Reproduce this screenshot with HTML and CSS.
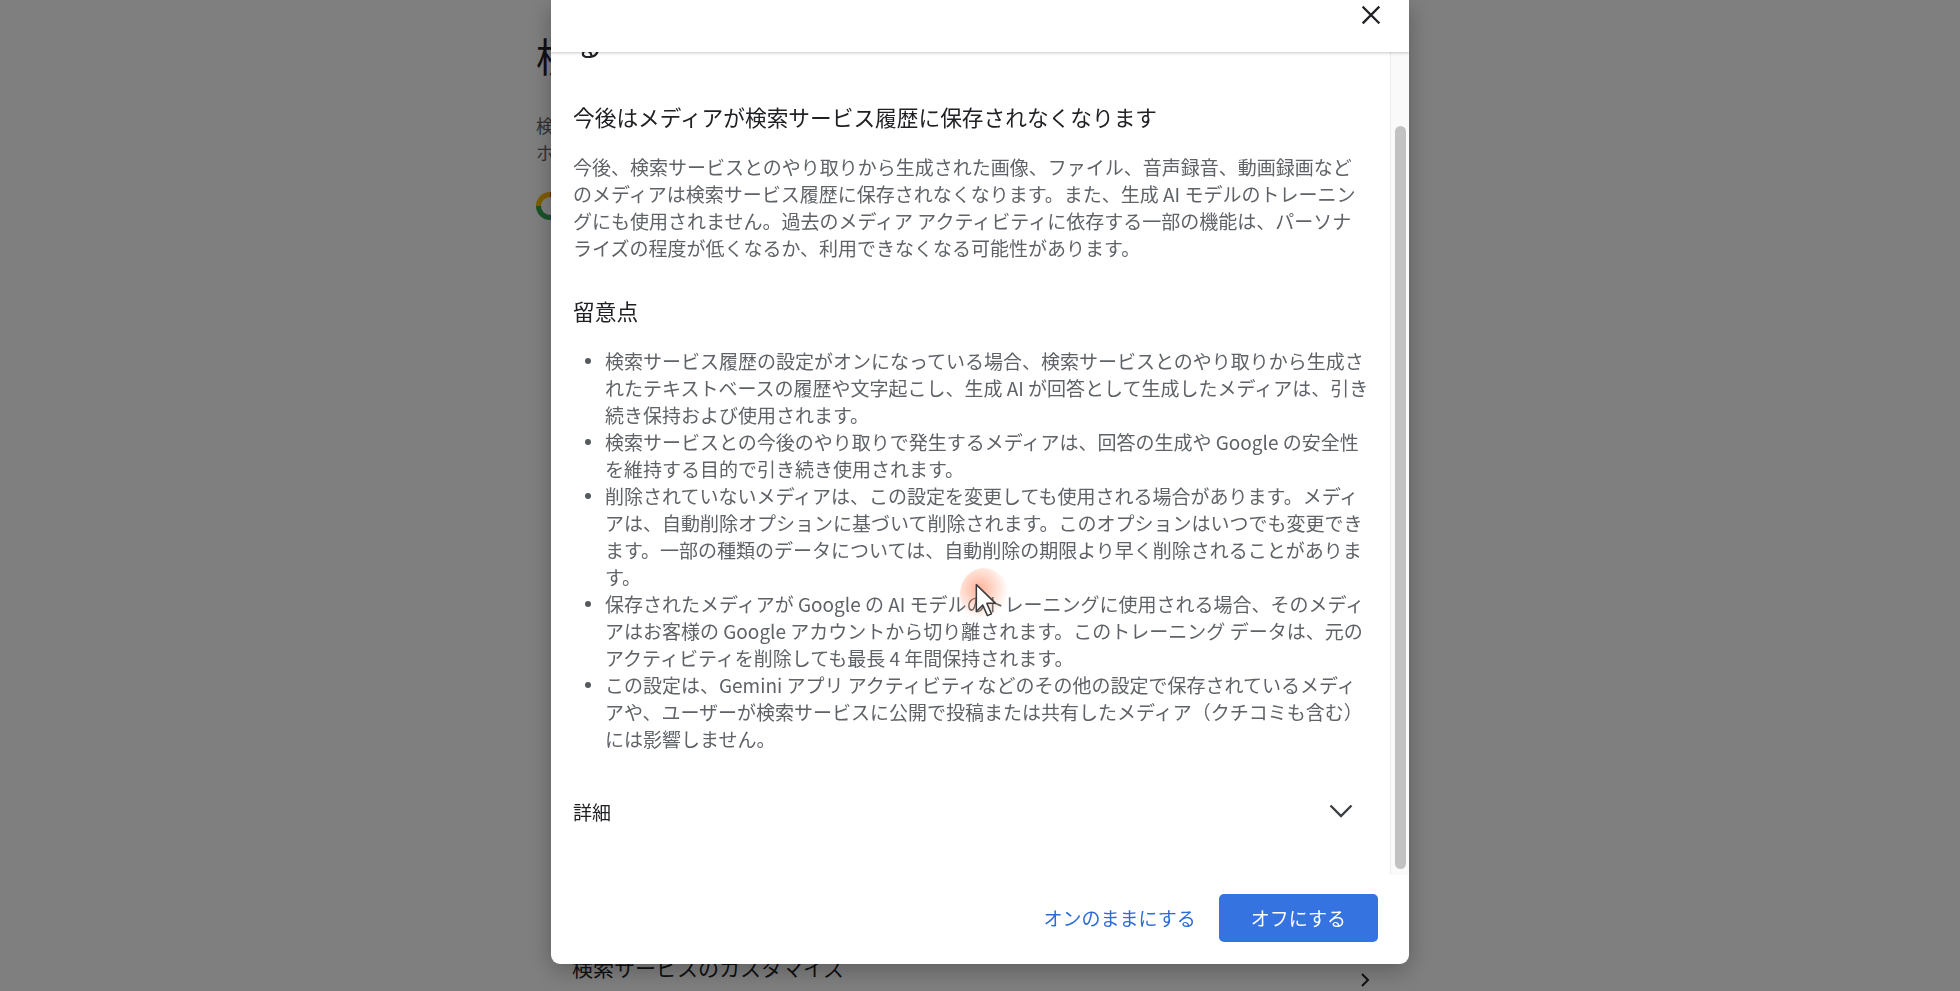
FILE: index.html
```html
<!DOCTYPE html>
<html lang="ja">
<head>
<meta charset="utf-8">
<title>検索サービス履歴</title>
<link rel="stylesheet" href="styles.css">
</head>
<body>
<div class="page">
  <h1 class="page-title">検索サービス履歴のメディア保存</h1>
  <p class="page-desc">検索サービス履歴に保存されるメディアを管理します。<br>ホームやその他の機能のパーソナライズに使用されます。</p>
  <div class="page-status"><span class="ring"></span><span>オン</span></div>
  <div class="page-row">
    <span class="page-row-label">検索サービスのカスタマイズ</span>
    <svg class="page-row-chev" width="12" height="16" viewBox="0 0 12 16"><path d="M3 2 L9 8 L3 14" fill="none" stroke="#202124" stroke-width="2"/></svg>
  </div>
</div>

<div class="scrim">
  <div class="dialog" role="dialog">
    <div class="dlg-header">
      <button class="close" aria-label="閉じる">
        <svg width="30" height="30" viewBox="0 0 30 30"><path d="M7.5 7.5 L22.5 22.5 M22.5 7.5 L7.5 22.5" stroke="#202124" stroke-width="2.3" stroke-linecap="square"/></svg>
      </button>
    </div>
    <div class="dlg-body">
      <div class="dlg-content">
        <h2 class="dlg-title">検索サービス履歴で画像などのメディアの保存をオフにする</h2>
        <h3 class="dlg-h3">今後はメディアが検索サービス履歴に保存されなくなります</h3>
        <p class="dlg-p">今後、検索サービスとのやり取りから生成された画像、ファイル、音声録音、動画録画など<br>のメディアは検索サービス履歴に保存されなくなります。また、生成 AI モデルのトレーニン<br>グにも使用されません。過去のメディア アクティビティに依存する一部の機能は、パーソナ<br>ライズの程度が低くなるか、利用できなくなる可能性があります。</p>
        <h3 class="dlg-h3 notes">留意点</h3>
        <ul class="dlg-list">
          <li><span>検索サービス履歴の設定がオンになっている場合、検索サービスとのやり取りから生成さ<br>れたテキストベースの履歴や文字起こし、生成 AI が回答として生成したメディアは、引き<br>続き保持および使用されます。</span></li>
          <li><span>検索サービスとの今後のやり取りで発生するメディアは、回答の生成や Google の安全性<br>を維持する目的で引き続き使用されます。</span></li>
          <li><span>削除されていないメディアは、この設定を変更しても使用される場合があります。メディ<br>アは、自動削除オプションに基づいて削除されます。このオプションはいつでも変更でき<br>ます。一部の種類のデータについては、自動削除の期限より早く削除されることがありま<br>す。</span></li>
          <li><span>保存されたメディアが Google の AI モデルのトレーニングに使用される場合、そのメディ<br>アはお客様の Google アカウントから切り離されます。このトレーニング データは、元の<br>アクティビティを削除しても最長 4 年間保持されます。</span></li>
          <li><span>この設定は、Gemini アプリ アクティビティなどのその他の設定で保存されているメディ<br>アや、ユーザーが検索サービスに公開で投稿または共有したメディア（クチコミも含む）<br>には影響しません。</span></li>
        </ul>
        <div class="details">
          <span>詳細</span>
          <svg class="details-chev" width="28" height="28" viewBox="0 0 28 28"><path d="M3.5 8.5 L14 19 L24.5 8.5" fill="none" stroke="#3c4043" stroke-width="2.4"/></svg>
        </div>
      </div>
      <div class="scrollbar"><div class="thumb"></div></div>
    </div>
    <div class="dlg-footer">
      <button class="btn-text">オンのままにする</button>
      <button class="btn-primary">オフにする</button>
    </div>
  </div>
</div>

<div class="cursor">
  <div class="cursor-glow"></div>
  <svg class="cursor-arrow" width="28" height="38" viewBox="0 0 24 32"><path d="M2 2 L2 25 L7.5 19.5 L11.5 28.5 L15 27 L11 18 L18.5 18 Z" fill="#fff" stroke="#3a3a3a" stroke-width="1.3" stroke-linejoin="round"/></svg>
</div>
</body>
</html>
```

FILE: styles.css
```css
* { box-sizing: border-box; }

html, body {
  margin: 0;
  padding: 0;
}

body {
  width: 1960px;
  height: 991px;
  overflow: hidden;
  background: #ffffff;
  font-family: "Noto Sans CJK JP", "Noto Sans", sans-serif;
  color: #202124;
}

/* ---------- background page ---------- */
.page {
  width: 888px;
  height: 991px;
  margin: 0 auto;
  display: flex;
  flex-direction: column;
}

.page-title {
  margin: 28px 0 0;
  font-size: 40px;
  line-height: 54px;
  font-weight: 400;
  color: #202124;
}

.page-desc {
  margin: 30px 0 0;
  font-size: 18px;
  line-height: 27px;
  color: #5f6368;
}

.page-status {
  margin-top: 26px;
  display: flex;
  align-items: center;
  gap: 12px;
  font-size: 18px;
}

.ring {
  width: 28px;
  height: 28px;
  border-radius: 50%;
  background: conic-gradient(#ea4335 0 25%, #4285f4 25% 50%, #34a853 50% 75%, #fbbc04 75% 100%);
  display: flex;
  align-items: center;
  justify-content: center;
}
.ring::after {
  content: "";
  width: 18px;
  height: 18px;
  border-radius: 50%;
  background: #fff;
}

.page-row {
  margin-top: auto;
  height: 58px;
  padding: 0 53px 0 36px;
  display: flex;
  justify-content: space-between;
}
.page-row-label {
  align-self: flex-start;
  font-size: 21px;
  line-height: 26px;
  margin-top: 21px;
}
.page-row-chev {
  align-self: flex-end;
  margin-bottom: 3px;
}

/* ---------- scrim + dialog ---------- */
.scrim {
  position: fixed;
  inset: 0;
  background: rgba(0, 0, 0, 0.5);
  display: flex;
  justify-content: center;
  align-items: flex-end;
  padding-bottom: 27px;
}

.dialog {
  width: 858px;
  height: 964px;
  background: #ffffff;
  border-radius: 0 0 9px 9px;
  box-shadow: 0 6px 24px rgba(0, 0, 0, 0.28);
  display: flex;
  flex-direction: column;
  overflow: hidden;
}

.dlg-header {
  height: 52px;
  flex: none;
  display: flex;
  justify-content: flex-end;
  align-items: flex-start;
  padding-right: 23px;
  background: #fff;
  box-shadow: 0 1px 3px rgba(0, 0, 0, 0.22);
  position: relative;
  z-index: 1;
}

.close {
  width: 30px;
  height: 30px;
  padding: 0;
  border: 0;
  background: none;
  display: flex;
}

.dlg-body {
  flex: 1;
  min-height: 0;
  display: flex;
  overflow: hidden;
}

.dlg-content {
  flex: 1;
  min-width: 0;
  padding: 0 22px;
}

.dlg-title {
  margin: -66px 0 0;
  font-size: 30px;
  line-height: 38px;
  font-weight: 400;
  color: #202124;
}

.dlg-h3 {
  margin: 41px 0 0;
  font-size: 21.7px;
  line-height: 28px;
  font-weight: 400;
  color: #202124;
  white-space: nowrap;
}
.dlg-h3.notes {
  margin-top: 36px;
}

.dlg-p {
  margin: 22px 0 0;
  font-size: 19px;
  line-height: 27px;
  color: #5f6368;
  white-space: nowrap;
}

.dlg-list {
  margin: 22px 0 0;
  padding: 0;
  list-style: none;
  font-size: 19px;
  line-height: 27px;
  color: #5f6368;
}
.dlg-list li {
  display: grid;
  grid-template-columns: 32px 1fr;
  white-space: nowrap;
}
.dlg-list li::before {
  content: "";
  width: 6px;
  height: 6px;
  border-radius: 50%;
  background: #555a5f;
  margin: 11px 0 0 12px;
}

.details {
  margin-top: 35px;
  height: 48px;
  display: flex;
  align-items: center;
  justify-content: space-between;
  font-size: 19px;
  color: #202124;
}
.details-chev {
  margin-right: 13px;
}

.scrollbar {
  width: 19px;
  flex: none;
  background: #fafafa;
  border-left: 1px solid #ececec;
  padding-left: 4px;
}
.thumb {
  width: 11px;
  height: 743px;
  margin-top: 74px;
  border-radius: 6px;
  background: #c2c2c2;
}

.dlg-footer {
  height: 89px;
  flex: none;
  display: flex;
  justify-content: flex-end;
  align-items: center;
  gap: 1px;
  padding: 0 31px 4px 0;
}

.btn-text,
.btn-primary {
  height: 48px;
  border: 0;
  border-radius: 5px;
  font-family: inherit;
  font-size: 19px;
  line-height: 48px;
}

.btn-text {
  padding: 0 22px;
  background: transparent;
  color: #2c6bd6;
}

.btn-primary {
  padding: 0 32px;
  background: #3574e0;
  color: #ffffff;
}

/* ---------- pointer overlay ---------- */
.cursor {
  position: fixed;
  left: 974px;
  top: 582px;
  width: 28px;
  height: 38px;
}
.cursor-glow {
  position: absolute;
  left: -14px;
  top: -14px;
  width: 48px;
  height: 52px;
  border-radius: 50%;
  background: radial-gradient(circle at 40% 40%, rgba(255, 100, 50, 0.5) 0%, rgba(255, 125, 80, 0.25) 40%, rgba(255, 160, 120, 0) 70%);
}
.cursor-arrow {
  position: absolute;
  left: 0;
  top: 0;
}
```
